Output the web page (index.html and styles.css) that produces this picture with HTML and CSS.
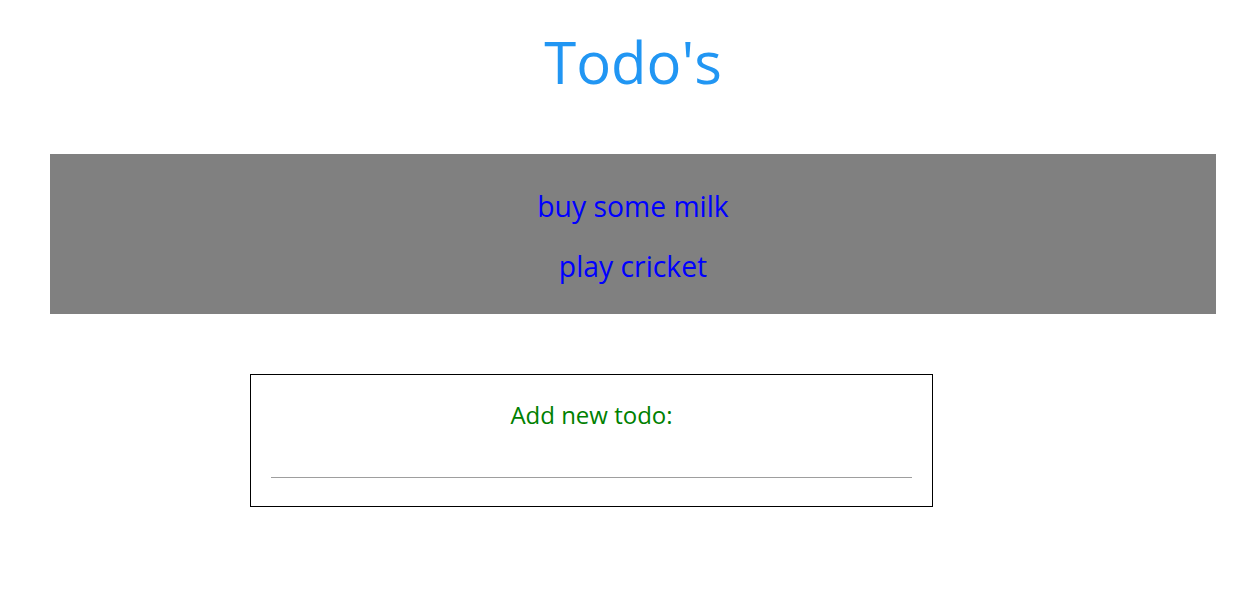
FILE: index.html
```html
<!DOCTYPE html>
<html>
<head>
<meta charset="utf-8">
<title>Todo's</title>
<link rel="stylesheet" href="styles.css">
</head>
<body>
<div class="app">
  <h1 class="title">Todo's</h1>
  <div class="todos">
    <p class="todo">buy some milk</p>
    <p class="todo">play cricket</p>
  </div>
  <form class="add-form">
    <label class="add-label" for="newtodo">Add new todo:</label>
    <input class="add-input" id="newtodo" type="text">
  </form>
</div>
</body>
</html>
```
FILE: styles.css
```css
html, body {
  margin: 0;
  padding: 0;
  background: #ffffff;
}
body {
  font-family: "Open Sans", "Noto Sans", sans-serif;
}
.app {
  padding: 0 41px 0 50px;
}
.title {
  margin: 0;
  padding-top: 22px;
  height: 154px;
  box-sizing: border-box;
  text-align: center;
  color: #2196f3;
  font-weight: 400;
  font-size: 58px;
  line-height: 80px;
}
.todos {
  background: #808080;
  height: 160px;
  box-sizing: border-box;
  padding-top: 22px;
}
.todo {
  margin: 0;
  text-align: center;
  color: #0000ff;
  font-size: 28.3px;
  line-height: 60px;
}
.add-form {
  margin: 60px 0 0 200px;
  width: 683px;
  height: 133px;
  box-sizing: border-box;
  border: 1px solid #000000;
  padding: 20px 20px 0 20px;
  display: flex;
  flex-direction: column;
  align-items: center;
}
.add-label {
  color: #008000;
  font-size: 24px;
  line-height: 40px;
}
.add-input {
  margin-top: 23px;
  width: 100%;
  box-sizing: border-box;
  border: none;
  border-bottom: 1px solid #9e9e9e;
  height: 20px;
  padding: 0;
  outline: none;
  background: transparent;
  font-family: inherit;
}
```
